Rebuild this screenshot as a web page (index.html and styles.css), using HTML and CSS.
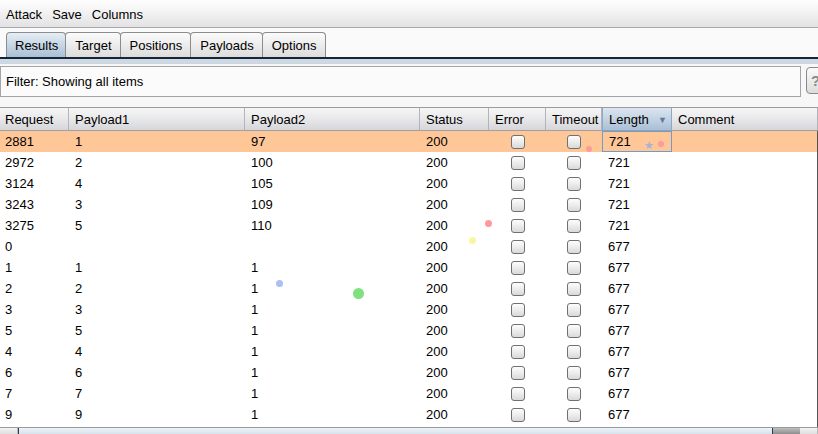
FILE: index.html
```html
<!DOCTYPE html>
<html>
<head>
<meta charset="utf-8">
<link rel="stylesheet" href="styles.css">
</head>
<body>
<div class="app">
  <div class="menubar">
    <span class="menu">Attack</span>
    <span class="menu">Save</span>
    <span class="menu">Columns</span>
  </div>
  <div class="tabs">
    <div class="tab active">Results</div>
    <div class="tab">Target</div>
    <div class="tab">Positions</div>
    <div class="tab">Payloads</div>
    <div class="tab">Options</div>
  </div>
  <div class="tabline"></div>
  <div class="filterrow">
    <div class="filter">Filter: Showing all items</div>
    <div class="helpbtn">?</div>
  </div>
  <div class="table">
    <div class="row head">
      <div class="c">Request</div><div class="c">Payload1</div><div class="c">Payload2</div><div class="c">Status</div><div class="c">Error</div><div class="c">Timeout</div><div class="c sorted">Length<span class="arrow">▼</span></div><div class="c">Comment</div>
    </div>
    <div class="body">
      <div class="row sel"><div class="c">2881</div><div class="c">1</div><div class="c">97</div><div class="c">200</div><div class="c cb"><span class="box"></span></div><div class="c cb"><span class="box"></span></div><div class="c focus">721</div><div class="c"></div></div>
      <div class="row"><div class="c">2972</div><div class="c">2</div><div class="c">100</div><div class="c">200</div><div class="c cb"><span class="box"></span></div><div class="c cb"><span class="box"></span></div><div class="c">721</div><div class="c"></div></div>
      <div class="row"><div class="c">3124</div><div class="c">4</div><div class="c">105</div><div class="c">200</div><div class="c cb"><span class="box"></span></div><div class="c cb"><span class="box"></span></div><div class="c">721</div><div class="c"></div></div>
      <div class="row"><div class="c">3243</div><div class="c">3</div><div class="c">109</div><div class="c">200</div><div class="c cb"><span class="box"></span></div><div class="c cb"><span class="box"></span></div><div class="c">721</div><div class="c"></div></div>
      <div class="row"><div class="c">3275</div><div class="c">5</div><div class="c">110</div><div class="c">200</div><div class="c cb"><span class="box"></span></div><div class="c cb"><span class="box"></span></div><div class="c">721</div><div class="c"></div></div>
      <div class="row"><div class="c">0</div><div class="c"></div><div class="c"></div><div class="c">200</div><div class="c cb"><span class="box"></span></div><div class="c cb"><span class="box"></span></div><div class="c">677</div><div class="c"></div></div>
      <div class="row"><div class="c">1</div><div class="c">1</div><div class="c">1</div><div class="c">200</div><div class="c cb"><span class="box"></span></div><div class="c cb"><span class="box"></span></div><div class="c">677</div><div class="c"></div></div>
      <div class="row"><div class="c">2</div><div class="c">2</div><div class="c">1</div><div class="c">200</div><div class="c cb"><span class="box"></span></div><div class="c cb"><span class="box"></span></div><div class="c">677</div><div class="c"></div></div>
      <div class="row"><div class="c">3</div><div class="c">3</div><div class="c">1</div><div class="c">200</div><div class="c cb"><span class="box"></span></div><div class="c cb"><span class="box"></span></div><div class="c">677</div><div class="c"></div></div>
      <div class="row"><div class="c">5</div><div class="c">5</div><div class="c">1</div><div class="c">200</div><div class="c cb"><span class="box"></span></div><div class="c cb"><span class="box"></span></div><div class="c">677</div><div class="c"></div></div>
      <div class="row"><div class="c">4</div><div class="c">4</div><div class="c">1</div><div class="c">200</div><div class="c cb"><span class="box"></span></div><div class="c cb"><span class="box"></span></div><div class="c">677</div><div class="c"></div></div>
      <div class="row"><div class="c">6</div><div class="c">6</div><div class="c">1</div><div class="c">200</div><div class="c cb"><span class="box"></span></div><div class="c cb"><span class="box"></span></div><div class="c">677</div><div class="c"></div></div>
      <div class="row"><div class="c">7</div><div class="c">7</div><div class="c">1</div><div class="c">200</div><div class="c cb"><span class="box"></span></div><div class="c cb"><span class="box"></span></div><div class="c">677</div><div class="c"></div></div>
      <div class="row"><div class="c">9</div><div class="c">9</div><div class="c">1</div><div class="c">200</div><div class="c cb"><span class="box"></span></div><div class="c cb"><span class="box"></span></div><div class="c">677</div><div class="c"></div></div>
      <span class="dot red" style="left:485px;top:89px"></span>
      <span class="dot yellow" style="left:469px;top:106px"></span>
      <span class="dot blue" style="left:276px;top:149px"></span>
      <span class="dot green big" style="left:353px;top:157px"></span>
      <span class="dot red small" style="left:586px;top:15px"></span>
      <span class="dot red small" style="left:658px;top:10px"></span>
      <span class="star" style="left:644px;top:9px">★</span>
    </div>
    <div class="hscroll">
      <div class="sbtn"></div>
      <div class="thumb"></div>
      <div class="track"></div>
      <div class="sbtn"></div>
    </div>
  </div>
</div>
</body>
</html>
```

FILE: styles.css
```css
html, body {
  margin: 0;
  padding: 0;
}
body {
  font-family: "Liberation Sans", Arial, sans-serif;
  font-size: 13px;
  color: #000;
  background: #f7f7f7;
  width: 818px;
  height: 434px;
  overflow: hidden;
}
.app {
  display: flex;
  flex-direction: column;
  height: 434px;
}
.menubar {
  height: 28px;
  box-sizing: border-box;
  display: flex;
  align-items: center;
  gap: 10px;
  padding-left: 6px;
  padding-top: 1px;
  background: linear-gradient(#fefefe, #f4f4f4 40%, #e2e2e4);
  border-bottom: 1px solid #a9a9a9;
}
.tabs {
  height: 29px;
  display: flex;
  align-items: flex-end;
  padding-left: 6px;
  background: #fafafa;
}
.tab {
  height: 25px;
  box-sizing: border-box;
  display: flex;
  align-items: center;
  padding: 0 8px 0 9px;
  margin-right: -1px;
  border: 1px solid #8c8c8c;
  border-bottom: none;
  border-radius: 4px 4px 0 0;
  background: linear-gradient(#fbfbfb, #ececec 50%, #dcdcdc);
}
.tab.active {
  padding: 0 7px 0 8px;
  background: linear-gradient(#e6eef5, #c6d6e4 50%, #a9c0d6);
}
.tabline {
  height: 4px;
  border-top: 2px solid #1b2431;
  background: #c9d9e8;
  border-bottom: 1px solid #d4d4d4;
}
.filterrow {
  display: flex;
  gap: 5px;
  padding: 2px 0 0 0;
  height: 38px;
  box-sizing: border-box;
}
.filter {
  width: 801px;
  flex: none;
  height: 31px;
  box-sizing: border-box;
  border: 1px solid #a4a4a4;
  background: #fbfbfb;
  display: flex;
  align-items: center;
  padding-left: 5px;
}
.helpbtn {
  flex: none;
  width: 24px;
  height: 27px;
  margin-top: 1px;
  box-sizing: border-box;
  border: 1px solid #8a8a8a;
  border-radius: 4px;
  background: linear-gradient(#fafafa, #dcdcdc);
  color: #8a8a8a;
  font-size: 15px;
  font-weight: bold;
  padding-left: 4px;
  line-height: 25px;
}
.table {
  margin-top: 5px;
  width: 818px;
  flex: 1;
  display: flex;
  flex-direction: column;
  min-height: 0;
}
.row {
  display: grid;
  grid-template-columns: 69px 176px 175px 69px 57px 56px 70px 146px;
  height: 21px;
  background: #fff;
}
.row .c {
  display: flex;
  align-items: center;
  padding-left: 5px;
  overflow: hidden;
  white-space: nowrap;
  box-sizing: border-box;
}
.row .c + .c {
  padding-left: 6px;
}
.row.head {
  height: 24px;
  background: linear-gradient(#f6f6f7, #e8e8ea 50%, #d5d6da);
  border-top: 1px solid #9b9ba0;
  border-bottom: 1px solid #9ea0a6;
  box-sizing: border-box;
}
.row.head .c {
  border-right: 1px solid #b2b4b9;
  padding-top: 1px;
}
.row.head .c:first-child {
  padding-left: 5px;
}
.row.head .c.sorted {
  background: linear-gradient(#dbe5ef, #c3d3e3 50%, #a9bfd6);
  border: 1px solid #8fa9c4;
  border-top: none;
  border-bottom: none;
  justify-content: space-between;
  padding-right: 4px;
}
.arrow {
  font-size: 9px;
  color: #5d7a9c;
}
.body {
  position: relative;
  flex: 1;
  background: #fff;
  border-right: 1px solid #555;
  overflow: hidden;
}
.row.sel {
  background: #ffc697;
}
.c.focus {
  border: 1px solid #6e9ccb;
}
.c.cb {
  justify-content: center;
}
.row .c.cb {
  padding-left: 0;
}
.box {
  width: 14px;
  height: 14px;
  box-sizing: border-box;
  border: 1px solid #707070;
  border-radius: 3px;
  background: linear-gradient(#fdfdfd, #ececec 50%, #d9d9d9);
}
.dot {
  position: absolute;
  width: 7px;
  height: 7px;
  border-radius: 50%;
}
.dot.red { background: #ff9a9a; }
.dot.yellow { background: #f7f7a2; }
.dot.blue { background: #a9bff5; }
.dot.green { background: #7fe07f; }
.dot.big { width: 11px; height: 11px; }
.dot.small { width: 6px; height: 6px; }
.star {
  position: absolute;
  font-size: 11px;
  color: #aab0d6;
  line-height: 1;
}
.hscroll {
  height: 6px;
  flex: none;
  display: flex;
  border-top: 1px solid #9a9a9a;
  background: #e8e8e8;
}
.sbtn {
  width: 17px;
  flex: none;
  background: linear-gradient(#f4f4f4, #dedede);
  border-right: 1px solid #bbb;
}
.thumb {
  width: 753px;
  flex: none;
  background: linear-gradient(#eef3f8, #d7e2ec);
  border-left: 1px solid #2e3a48;
  border-right: 1px solid #2e3a48;
}
.track {
  flex: 1;
  background: linear-gradient(#bfbfbf, #8e8e8e);
}
```
